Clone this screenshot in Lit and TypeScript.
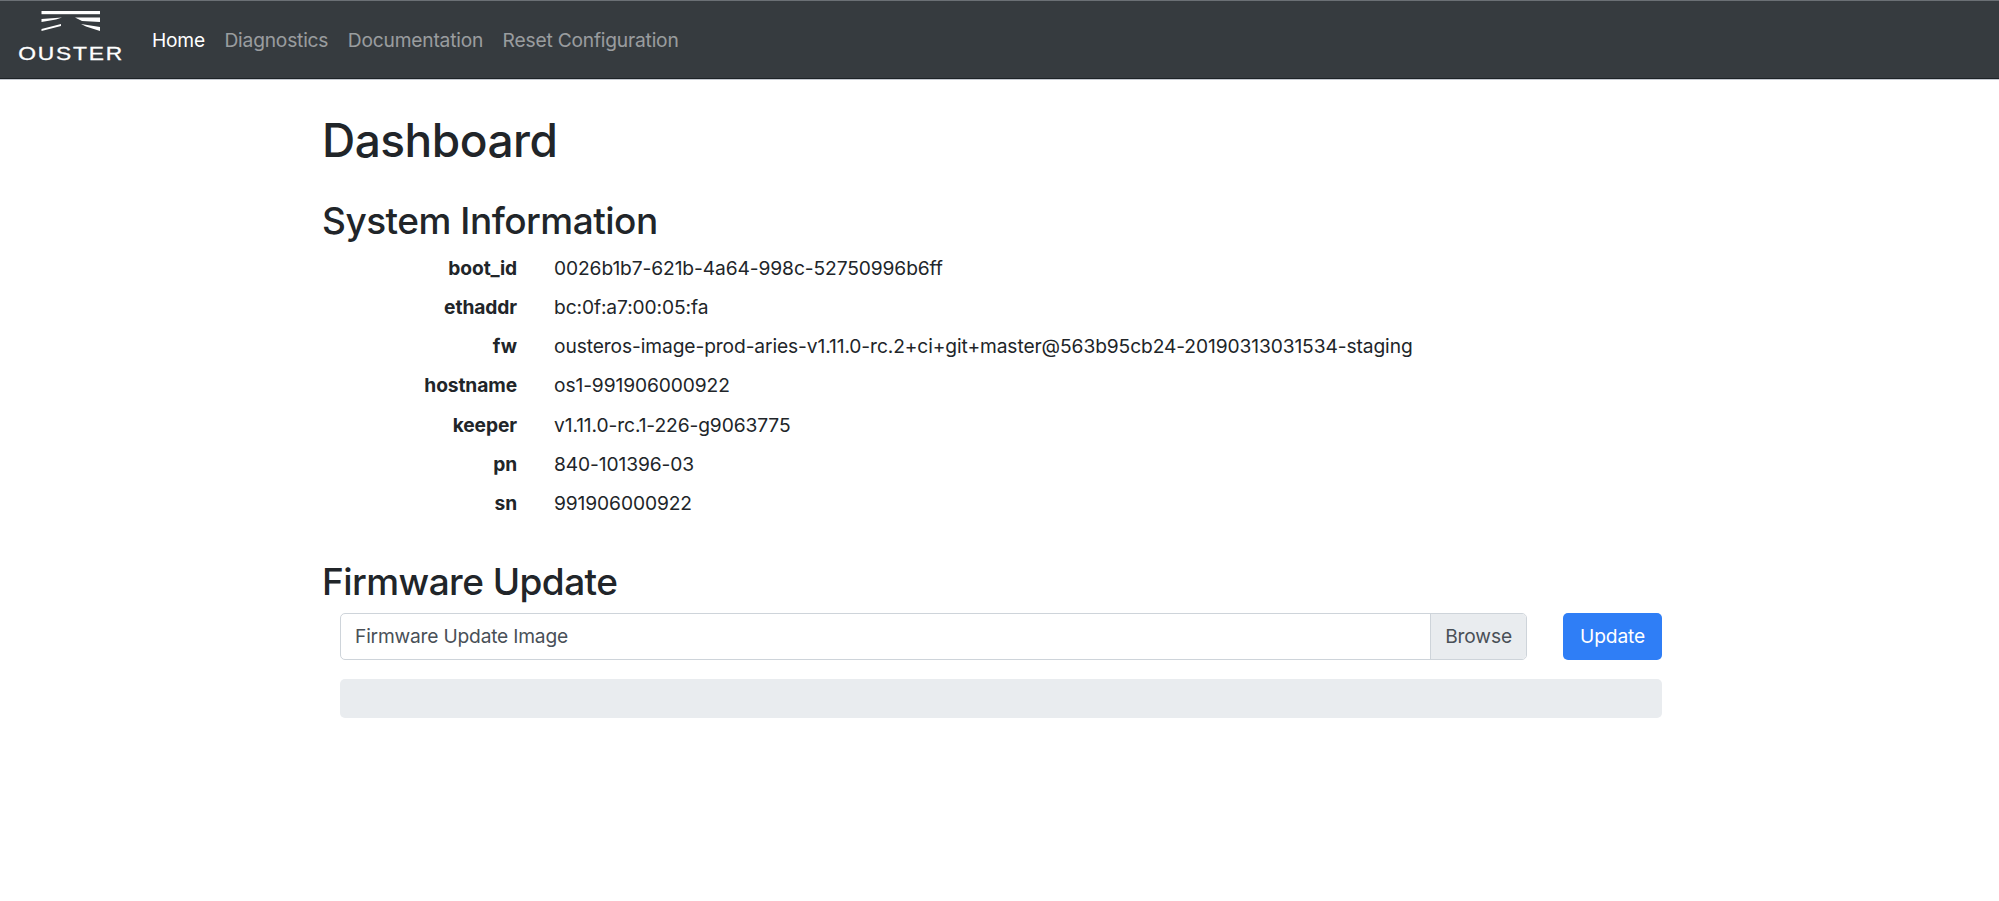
import { LitElement, html, css } from "lit";
import { customElement } from "lit/decorators.js";

const INFO: [string, string][] = [
  ["boot_id", "0026b1b7-621b-4a64-998c-52750996b6ff"],
  ["ethaddr", "bc:0f:a7:00:05:fa"],
  ["fw", "ousteros-image-prod-aries-v1.11.0-rc.2+ci+git+master@563b95cb24-20190313031534-staging"],
  ["hostname", "os1-991906000922"],
  ["keeper", "v1.11.0-rc.1-226-g9063775"],
  ["pn", "840-101396-03"],
  ["sn", "991906000922"],
];

@customElement("app-root")
export class AppRoot extends LitElement {
  static styles = css`
    :host { display: block; font-family: Inter, "Liberation Sans", sans-serif; color: #212529; background: #fff; min-height: 901px; }
    * { box-sizing: border-box; }
    .nav { height: 79px; background: #363b3f; border-top: 1px solid #6b7075; border-bottom: 1px solid #1d2226; display: flex; align-items: center; padding-left: 19px; box-shadow: 0 1px 0 #c4c8cf; }
    .brand { width: 104px; display: flex; flex-direction: column; align-items: center; color: #fff; margin-right: 29px; padding-bottom: 6px; }
    .brand svg { display: block; margin-bottom: 14px; }
    .brand span { font-family: "Liberation Sans", sans-serif; font-size: 19px; line-height: 18px; letter-spacing: 1.5px; transform: scaleX(1.2); -webkit-text-stroke: 0.3px #fff; }
    .links { display: flex; gap: 19.5px; margin-top: 1px; }
    .links a { font-size: 19.2px; color: rgba(255,255,255,.5); letter-spacing: -0.2px; }
    .links a.on { color: #fff; }
    .main { width: 1340px; margin-left: 322px; }
    h1 { font-size: 46px; font-weight: 500; line-height: 56px; margin: 33px 0 0; letter-spacing: -0.5px; }
    h2 { font-size: 37px; font-weight: 500; line-height: 46px; margin: 0; letter-spacing: -0.5px; }
    .sys { margin-top: 30px; }
    .rows { display: grid; grid-template-columns: 195px 1fr; column-gap: 37px; grid-auto-rows: 39.25px; margin-top: 4px; align-items: center; font-size: 19.2px; letter-spacing: -0.1px; }
    .k { font-weight: 700; text-align: right; }
    .fw { margin-top: 36px; letter-spacing: -0.55px; }
    .form { margin-left: 18px; margin-top: 8px; }
    .line { display: flex; align-items: stretch; height: 47px; }
    .file { width: 1188px; display: flex; border: 1.5px solid #ced4da; border-radius: 5px; color: #495057; font-size: 19.2px; overflow: hidden; }
    .file .ph { flex: 1; display: flex; align-items: center; padding-left: 14px; letter-spacing: -0.2px; }
    .file .br { width: 96px; background: #e9ecef; border-left: 1.5px solid #ced4da; display: flex; align-items: center; justify-content: center; letter-spacing: -0.15px; }
    .btn { width: 99px; margin-left: 36px; background: #2f7ef6; color: #fff; border: 0; border-radius: 5px; font: inherit; font-size: 19.2px; letter-spacing: -0.15px; padding: 0; }
    .bar { height: 39px; margin-top: 19px; width: 1322px; background: #e9ecef; border-radius: 5px; }
  `;

  render() {
    return html`
      <div class="nav">
        <div class="brand">
          <svg width="60" height="20" viewBox="0 0 60 20" fill="#fff">
            <rect x="0.5" y="0" width="58.5" height="3.2"/>
            <polygon points="0.5,8 21,6.5 15,8.5 0.5,11"/>
            <polygon points="0.5,18 20,13 20,15 0.5,20"/>
            <polygon points="34,6.5 59,6.5 59,11 41,10"/>
            <polygon points="40,13 59,16 59,20 45,15.5"/>
          </svg>
          <span>OUSTER</span>
        </div>
        <div class="links">
          <a class="on">Home</a><a>Diagnostics</a><a>Documentation</a><a>Reset Configuration</a>
        </div>
      </div>
      <div class="main">
        <h1>Dashboard</h1>
        <h2 class="sys">System Information</h2>
        <div class="rows">
          ${INFO.map(([k, v]) => html`<div class="k">${k}</div><div>${v}</div>`)}
        </div>
        <h2 class="fw">Firmware Update</h2>
        <div class="form">
          <div class="line">
            <div class="file"><div class="ph">Firmware Update Image</div><div class="br">Browse</div></div>
            <button class="btn">Update</button>
          </div>
          <div class="bar"></div>
        </div>
      </div>
    `;
  }
}
